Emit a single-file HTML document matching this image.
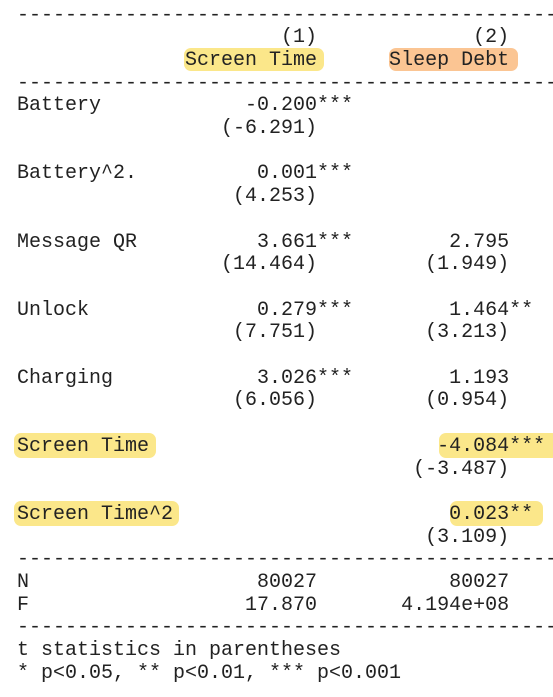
<!DOCTYPE html>
<html><head><meta charset="utf-8"><style>
html,body{margin:0;padding:0;background:#fff;width:553px;height:697px;overflow:hidden;position:relative}
.hl{position:absolute;border-radius:7px}
.y{background:#fbe78a}
.o{background:#fbc593}
pre{position:absolute;left:17px;top:4.5px;margin:0;font-family:"Liberation Mono",monospace;font-size:20px;line-height:22.7px;color:#222;white-space:pre}
</style></head><body>
<div class="hl y" style="left:184px;top:48px;width:140px;height:23px"></div>
<div class="hl o" style="left:389px;top:48px;width:129px;height:23px"></div>
<div class="hl y" style="left:14px;top:433px;width:142px;height:25px"></div>
<div class="hl y" style="left:439px;top:433px;width:120px;height:25px"></div>
<div class="hl y" style="left:14px;top:501px;width:165px;height:25px"></div>
<div class="hl y" style="left:450px;top:501px;width:93px;height:25px"></div>
<pre>----------------------------------------------
                      (1)             (2)
              Screen Time      Sleep Debt
----------------------------------------------
Battery            -0.200***
                 (-6.291)

Battery^2.          0.001***
                  (4.253)

Message QR          3.661***        2.795
                 (14.464)         (1.949)

Unlock              0.279***        1.464**
                  (7.751)         (3.213)

Charging            3.026***        1.193
                  (6.056)         (0.954)

Screen Time                        -4.084***
                                 (-3.487)

Screen Time^2                       0.023**
                                  (3.109)
----------------------------------------------
N                   80027           80027
F                  17.870       4.194e+08
----------------------------------------------
t statistics in parentheses
* p&lt;0.05, ** p&lt;0.01, *** p&lt;0.001</pre>
</body></html>
